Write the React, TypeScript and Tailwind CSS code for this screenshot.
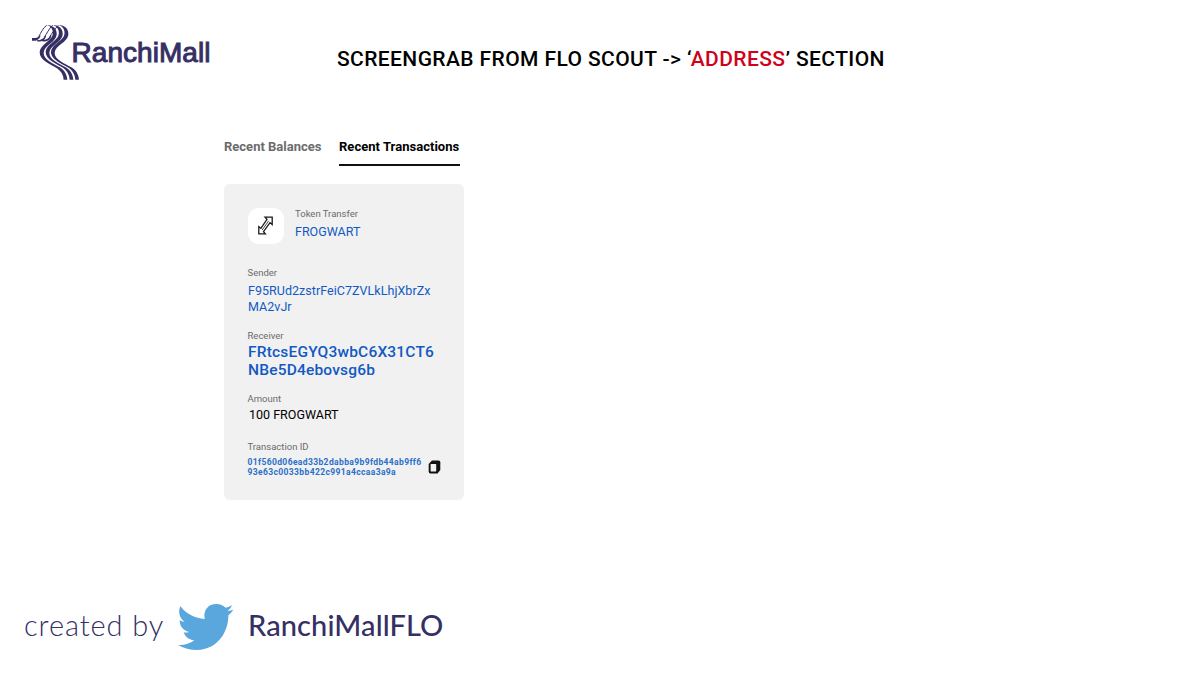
function Logo() {
  return (
    <svg className="h-[75px] w-[70px] shrink-0" viewBox="0 0 210 225" fill="#352f64">
      <path d="M80 30 C93 34 101 44 98 59 C94 78 60 89 59 111 C58 136 92 148 111 160 C124 169 130 180 131 194 L142 194 C141 177 132 165 119 157 C101 146 70 134 71 113 C73 91 107 82 110 60 C112 43 100 30 80 30 Z" />
      <path d="M98 30 C111 34 119 44 116 59 C112 78 78 88 77 110 C76 134 110 146 129 158 C142 167 148 180 149 194 L160 194 C159 177 150 165 137 157 C119 146 87 134 88 113 C90 91 125 82 128 60 C130 43 118 30 98 30 Z" />
      <path d="M115 30 C128 34 136 44 133 59 C129 78 94 88 93 110 C92 134 127 146 146 158 C159 167 165 180 166 194 L177 194 C176 177 167 165 154 157 C136 146 103 134 104 113 C106 91 142 82 145 60 C147 43 135 30 115 30 Z" />
      <path
        d="M80 31 C68 40 64 52 56 65 M98 31 C86 41 81 56 73 66 M115 31 C103 43 96 55 88 67"
        fill="none"
        stroke="#352f64"
        strokeWidth="3"
      />
      <path d="M36 69 C46 70 55 68 61 60 C62 71 50 80 36 77 Z M51 76 C62 76 72 70 78 60 C79 73 66 82 51 79 Z M66 76 C79 75 88 69 94 59 C95 73 82 81 66 79 Z" />
    </svg>
  );
}

function TransferIcon() {
  return (
    <svg className="h-[19px] w-[15px]" viewBox="0 0 15 19" fill="none" stroke="#1a1a1a" strokeWidth="1.3">
      <path d="M7 1.1H14.2V8.6L12 6.6L5.5 15.6L7.4 17.9H.8V10.6L2.9 12.4L9 3.4Z" />
      <path d="M10.6 4.9L4.1 14.1" strokeWidth=".8" />
    </svg>
  );
}

function CopyIcon() {
  return (
    <svg className="-mr-px h-[14px] w-[13px] shrink-0" viewBox="0 0 13 14">
      <path d="M4 .5H10.5Q12.3 .5 12.3 2.3V10L9.5 13.5H2.5Q.7 13.5 .7 11.7V4Z" fill="#111" />
      <rect x="2.6" y="4" width="5.6" height="7.6" rx=".5" fill="#f1f1f1" />
    </svg>
  );
}

function Label({ children }: { children: string }) {
  return <div className="text-[9.5px] leading-[12px] text-[#6b6b6b]">{children}</div>;
}

export default function App() {
  return (
    <div className="flex h-[675px] w-[1200px] flex-col overflow-hidden bg-white font-['Roboto',sans-serif]">
      <header className="flex h-[90px] pt-[15px] pl-5">
        <Logo />
        <div className="-ml-[20px] w-[180px] pt-[20px] pl-[1.5px] font-['Liberation_Sans',sans-serif] text-[28px] leading-[36px] tracking-[0.05px] text-[#352f64] [-webkit-text-stroke:1px_#352f64]">
          RanchiMall
        </div>
        <h1 className="ml-[87px] pt-[31px] text-[21px] leading-[26px] font-medium tracking-[0.4px] whitespace-nowrap text-black">
          SCREENGRAB FROM FLO SCOUT -&gt; ‘<span className="text-[#d0021b]">ADDRESS</span>’ SECTION
        </h1>
      </header>

      <main className="ml-[224px] w-60 pt-[48px] whitespace-nowrap">
        <nav className="flex h-[28px] gap-[18px] text-[13px] leading-[18px] font-bold">
          <span className="w-[97px] text-[#6b6b6b]">Recent Balances</span>
          <span className="w-[121px] border-b-2 border-[#111] tracking-[0.03px] text-black">Recent Transactions</span>
        </nav>

        <section className="mt-[18px] h-[316px] w-60 rounded-md bg-[#f1f1f1] pt-[23.5px] pr-6 pl-[23.5px]">
          <div className="flex h-[36px] gap-[11.5px]">
            <div className="flex size-[36px] items-center justify-center rounded-[11px] bg-white">
              <TransferIcon />
            </div>
            <div className="pt-[0.5px]">
              <Label>Token Transfer</Label>
              <div className="mt-[4px] text-[12.5px] leading-[16px] text-[#1259c3]">FROGWART</div>
            </div>
          </div>

          <div className="mt-[23.5px] h-[63px]">
            <Label>Sender</Label>
            <div className="mt-[4px] ml-[0.5px] text-[12.5px] leading-[15.5px] tracking-[0.04px] text-[#1259c3]">
              F95RUd2zstrFeiC7ZVLkLhjXbrZx
              <br />
              MA2vJr
            </div>
          </div>

          <div className="h-[63px]">
            <Label>Receiver</Label>
            <div className="mt-px ml-[0.5px] text-[15.5px] leading-[18px] font-medium tracking-[0.19px] text-[#1259c3]">
              FRtcsEGYQ3wbC6X31CT6
              <br />
              NBe5D4ebovsg6b
            </div>
          </div>

          <div className="h-[48px]">
            <Label>Amount</Label>
            <div className="mt-[2px] ml-[1.5px] text-[12.5px] leading-[16px] text-black">100 FROGWART</div>
          </div>

          <div>
            <Label>Transaction ID</Label>
            <div className="mt-[4px] flex items-center justify-between">
              <div className="pt-px text-[8.5px] leading-[9.5px] font-bold tracking-[0.38px] text-[#2a6fc9]">
                01f560d06ead33b2dabba9b9fdb44ab9ff6
                <br />
                93e63c0033bb422c991a4ccaa3a9a
              </div>
              <CopyIcon />
            </div>
          </div>
        </section>
      </main>

      <footer className="mt-[103px] flex h-[48px] pl-6 font-['Lato',sans-serif] whitespace-nowrap text-[#352f64]">
        <div className="w-[153px] pt-[4px] text-[29px] leading-[36px] font-light tracking-[0.9px]">created by</div>
        <svg className="h-[48px] w-[58px] shrink-0" viewBox="3 0 174 144" fill="#5aa7de">
          <path d="M13 9 C31 34 58 46 86 48 C81 21 97 3 121 3 C133 3 142 8 149 14 Q159 12 168 6 Q165 17 155 24 Q164 23 172 20 Q167 29 157 37 C158 86 124 141 63 141 Q32 141 6 126 Q34 128 55 112 C39 111 28 102 23 88 Q32 90 39 87 C21 82 11 70 11 52 Q18 56 26 57 C9 44 6 27 13 9Z" />
        </svg>
        <div className="ml-[13px] pt-[4px] text-[29px] leading-[36px] font-medium tracking-[0.1px]">RanchiMallFLO</div>
      </footer>
    </div>
  );
}
